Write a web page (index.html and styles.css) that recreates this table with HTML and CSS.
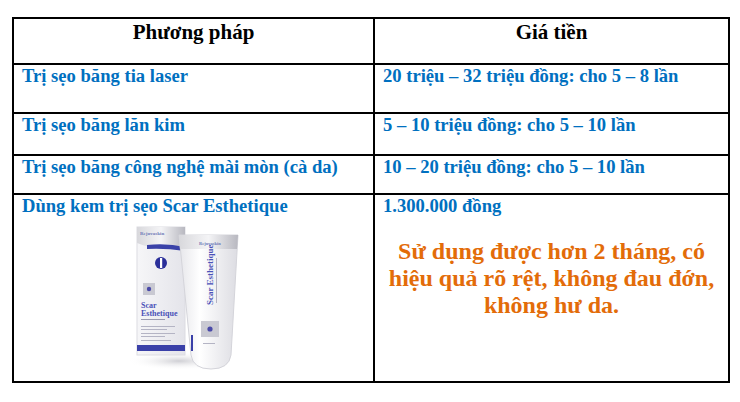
FILE: index.html
```html
<!DOCTYPE html>
<html lang="vi">
<head>
<meta charset="utf-8">
<title>Bảng giá trị sẹo</title>
<link rel="stylesheet" href="styles.css">
</head>
<body>
<table class="price-table">
  <colgroup><col class="col-method"><col class="col-price"></colgroup>
  <tr class="row-head">
    <th>Phương pháp</th>
    <th>Giá tiền</th>
  </tr>
  <tr class="row-1">
    <td>Trị sẹo băng tia laser</td>
    <td>20 triệu – 32 triệu đồng: cho 5 – 8 lần</td>
  </tr>
  <tr class="row-2">
    <td>Trị sẹo băng lăn kim</td>
    <td>5 – 10 triệu đồng: cho 5 – 10 lần</td>
  </tr>
  <tr class="row-3">
    <td>Trị sẹo băng công nghệ mài mòn (cà da)</td>
    <td>10 – 20 triệu đồng: cho 5 – 10 lần</td>
  </tr>
  <tr class="row-4">
    <td>
      <div>Dùng kem trị sẹo Scar Esthetique</div>
      <svg class="product" width="124" height="152" viewBox="0 0 124 152">
        <defs>
          <linearGradient id="silver" x1="0" y1="0" x2="1" y2="0">
            <stop offset="0" stop-color="#d8d8dc"/>
            <stop offset="0.5" stop-color="#f4f4f6"/>
            <stop offset="1" stop-color="#b8b8c0"/>
          </linearGradient>
          <linearGradient id="tube" x1="0" y1="0" x2="1" y2="0">
            <stop offset="0" stop-color="#e6e6ea"/>
            <stop offset="0.35" stop-color="#ffffff"/>
            <stop offset="1" stop-color="#dcdce2"/>
          </linearGradient>
          <linearGradient id="boxg" x1="0" y1="0" x2="1" y2="0">
            <stop offset="0" stop-color="#f6f6f8"/>
            <stop offset="1" stop-color="#e4e4ea"/>
          </linearGradient>
          <radialGradient id="shadow" cx="0.5" cy="0.5" r="0.5">
            <stop offset="0" stop-color="#cfcfd4"/>
            <stop offset="1" stop-color="#ffffff" stop-opacity="0"/>
          </radialGradient>
        </defs>
        <ellipse cx="52" cy="138" rx="52" ry="9" fill="url(#shadow)"/>
        <!-- box -->
        <rect x="10" y="4" width="48" height="128" fill="url(#boxg)" stroke="#dcdce2"/>
        <path d="M10 4 H58 V22 Q34 30 10 20 Z" fill="url(#silver)"/>
        <text x="13" y="12" font-size="5" fill="#6f7bb8" font-family="Liberation Serif, serif">Rejuvaskin</text>
        <path d="M20 22 Q40 20 58 24 V28 Q38 25 20 26 Z" fill="#3a42a8"/>
        <circle cx="34" cy="40" r="6" fill="#2b2f9a"/>
        <rect x="33" y="35" width="2.2" height="10" fill="#fff"/>
        <rect x="16" y="60" width="12" height="12" fill="#c9c9d2"/>
        <circle cx="22" cy="66" r="2.2" fill="#4a4aa8"/>
        <text x="14" y="85" font-size="8" fill="#4a52b8" font-family="Liberation Serif, serif">Scar</text>
        <text x="14" y="93" font-size="8" fill="#4a52b8" font-family="Liberation Serif, serif">Esthetique</text>
        <rect x="14" y="96" width="24" height="1" fill="#9a9ab0"/>
        <rect x="14" y="103" width="34" height="1" fill="#b4b4c4"/>
        <rect x="14" y="106" width="26" height="1" fill="#b4b4c4"/>
        <rect x="14" y="110" width="34" height="1" fill="#b4b4c4"/>
        <rect x="14" y="113" width="24" height="1" fill="#b4b4c4"/>
        <rect x="14" y="117" width="30" height="1" fill="#b4b4c4"/>
        <rect x="10" y="122" width="48" height="6" fill="#3a40a8"/>
        <!-- tube -->
        <path d="M52 12 H111 L104 132 Q102 146 84 146 Q66 146 64 132 Z" fill="url(#tube)" stroke="#d4d4da"/>
        <path d="M52 12 H111 L110 26 H53 Z" fill="url(#silver)"/>
        <text x="72" y="22" font-size="4.5" fill="#6f7bb8" font-family="Liberation Serif, serif">Rejuvaskin</text>
        <text transform="translate(86 82) rotate(-90)" font-size="9" fill="#4a52b8" font-family="Liberation Serif, serif">Scar Esthetique</text>
        <rect x="89" y="35" width="1" height="45" fill="#b4b4c4"/>
        <rect x="74" y="98" width="18" height="16" fill="#c9c9d2"/>
        <circle cx="83" cy="106" r="2.6" fill="#4a4aa8"/>
        <rect x="76" y="120" width="12" height="1" fill="#b4b4c4"/>
        <rect x="64" y="112" width="2" height="16" fill="#3a40a8"/>
      </svg>
    </td>
    <td>
      <div>1.300.000 đồng</div>
      <p class="note">Sử dụng được hơn 2 tháng, có hiệu quả rõ rệt, không đau đớn, không hư da.</p>
    </td>
  </tr>
</table>
</body>
</html>
```
FILE: styles.css
```css
html, body {
  margin: 0;
  padding: 0;
  background: #ffffff;
}
body {
  font-family: "Liberation Serif", "Times New Roman", serif;
  font-weight: bold;
}
.price-table {
  margin: 17px 0 0 12px;
  width: 716px;
  border-collapse: collapse;
  table-layout: fixed;
}
.col-method { width: 361px; }
.col-price { width: 355px; }
.price-table th,
.price-table td {
  border: 2px solid #000;
  vertical-align: top;
  text-align: left;
  padding: 0 8px 0 8px;
}
.price-table th {
  text-align: center;
  font-size: 21px;
  color: #000;
  line-height: 26px;
  padding-top: 0;
}
.price-table td {
  font-size: 18.6px;
  color: #0070c0;
  line-height: 21px;
}
.row-head { height: 46px; }
.row-1 { height: 49px; }
.row-2 { height: 42px; }
.row-3 { height: 39px; }
.row-4 { height: 188px; }
.product {
  display: block;
  margin: 7px 0 0 105px;
}
.note {
  margin: 22px 4px 0 4px;
  text-align: center;
  color: #e36c09;
  font-size: 24px;
  line-height: 27px;
}
```
